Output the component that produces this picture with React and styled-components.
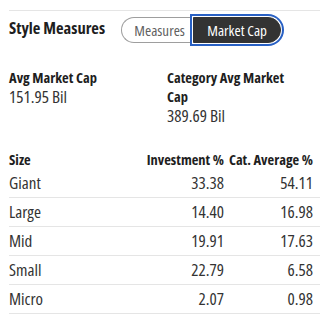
import React from "react";
import styled, { createGlobalStyle, css } from "styled-components";

const FONT = `"Open Sans", "Liberation Sans", sans-serif`;

const Global = createGlobalStyle`
  html, body { margin: 0; padding: 0; background: #fff; }
  body { font-family: ${FONT}; font-stretch: 75%; color: #1e1e1e; }
`;

const Page = styled.div`
  width: 320px;
  padding-left: 9px;
  padding-top: 10px;
  box-sizing: border-box;
`;

const Header = styled.div`
  display: flex;
  align-items: flex-start;
  gap: 16px;
  border-top: 1px solid #e5e5e5;
  padding-top: 6px;
  height: 26px;
`;

const Title = styled.h2`
  margin: 0;
  padding-top: 1px;
  font-size: 16.5px;
  font-weight: 700;
  line-height: 20px;
  color: #1e1e1e;
  white-space: nowrap;
`;

const Toggle = styled.div`
  display: flex;
  height: 26px;
`;

const ToggleButton = styled.button`
  font-family: ${FONT};
  font-stretch: 75%;
  font-size: 15px;
  line-height: 20px;
  height: 26px;
  margin: 0;
  white-space: nowrap;
  cursor: pointer;
  ${(p) =>
    p.$active
      ? css`
          background: #333;
          color: #fff;
          border: 1px solid #333;
          border-radius: 0 13px 13px 0;
          padding: 0;
          width: 88px;
          box-shadow: 0 0 0 1px #fff, 0 0 0 3px #2860c4;
        `
      : css`
          background: #fff;
          color: #616161;
          border: 1px solid #9e9e9e;
          border-right: none;
          border-radius: 13px 0 0 13px;
          padding: 0 0 0 4px;
          width: 72px;
        `}
`;

const Stats = styled.div`
  display: grid;
  grid-template-columns: 158px 125px;
  margin-top: 25px;
`;

const Stat = styled.div`
  display: flex;
  flex-direction: column;
`;

const StatLabel = styled.div`
  font-size: 14.5px;
  font-weight: 700;
  line-height: 19px;
  color: #1e1e1e;
`;

const StatValue = styled.div`
  font-size: 17px;
  line-height: 20px;
  color: #333;
`;

const Table = styled.div`
  margin-top: 24px;
  display: grid;
  grid-template-columns: 1fr 90px 96px;
`;

const Cell = styled.div`
  white-space: nowrap;
  text-align: ${(p) => (p.$num ? "right" : "left")};
  ${(p) => p.$last && "padding-right: 7px;"}
  ${(p) =>
    p.$head
      ? css`
          font-size: 14.5px;
          font-weight: 700;
          line-height: 19px;
          color: #1e1e1e;
        `
      : css`
          font-size: 17px;
          font-weight: 400;
          line-height: 20px;
          color: #333;
          padding-top: 4px;
          padding-bottom: 4px;
          border-bottom: 1px solid #e5e5e5;
        `}
`;

const rows = [
  ["Giant", "33.38", "54.11"],
  ["Large", "14.40", "16.98"],
  ["Mid", "19.91", "17.63"],
  ["Small", "22.79", "6.58"],
  ["Micro", "2.07", "0.98"],
];

export default function App() {
  return (
    <Page>
      <Global />
      <Header>
        <Title>Style Measures</Title>
        <Toggle>
          <ToggleButton>Measures</ToggleButton>
          <ToggleButton $active>Market Cap</ToggleButton>
        </Toggle>
      </Header>
      <Stats>
        <Stat>
          <StatLabel>Avg Market Cap</StatLabel>
          <StatValue>151.95 Bil</StatValue>
        </Stat>
        <Stat>
          <StatLabel>Category Avg Market Cap</StatLabel>
          <StatValue>389.69 Bil</StatValue>
        </Stat>
      </Stats>
      <Table>
        <Cell $head>Size</Cell>
        <Cell $head $num>Investment %</Cell>
        <Cell $head $num $last>Cat. Average %</Cell>
        {rows.map((r) => (
          <React.Fragment key={r[0]}>
            <Cell>{r[0]}</Cell>
            <Cell $num>{r[1]}</Cell>
            <Cell $num $last>{r[2]}</Cell>
          </React.Fragment>
        ))}
      </Table>
    </Page>
  );
}
